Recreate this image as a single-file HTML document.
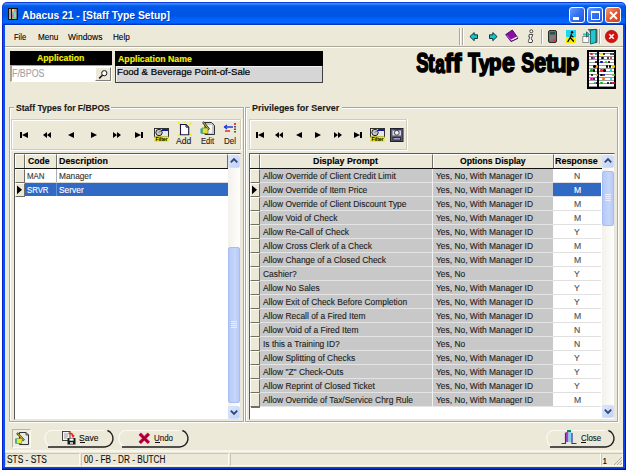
<!DOCTYPE html>
<html><head><meta charset="utf-8"><title>Abacus 21 - [Staff Type Setup]</title>
<style>
html,body{margin:0;padding:0;}
body{width:630px;height:474px;position:relative;overflow:hidden;background:#fff;font-family:"Liberation Sans",sans-serif;}
.a{position:absolute;box-sizing:border-box;}
.t{position:absolute;white-space:nowrap;font-family:"Liberation Sans",sans-serif;-webkit-text-stroke:0.12px currentColor;}
svg{position:absolute;overflow:visible;}
</style></head><body>
<div class="a" style="left:2px;top:2px;width:624px;height:468px;background:#0A3CD8;border-radius:5px 5px 0 0;"></div>
<div class="a" style="left:3px;top:3px;width:622px;height:466px;background:#0650F0;border-radius:4px 4px 0 0;"></div>
<div class="a" style="left:3px;top:3px;width:622px;height:22px;border-radius:4px 4px 0 0;background:linear-gradient(#3A90FF 0px,#3A90FF 1px,#1464F2 2px,#0058E8 4px,#0054E4 13px,#0062FA 16px,#0068FF 20px,#0036C8 21px,#0030C0 22px);"></div>
<div class="a" style="left:2px;top:25px;width:1px;height:445px;background:#0A20C8;"></div>
<div class="a" style="left:625px;top:25px;width:1px;height:445px;background:#00109A;"></div>
<div class="a" style="left:623px;top:25px;width:2px;height:443px;background:#0648F0;"></div>
<div class="a" style="left:3px;top:467px;width:622px;height:1px;background:#0648F0;"></div>
<div class="a" style="left:3px;top:468px;width:622px;height:1px;background:#0032C4;"></div>
<div class="a" style="left:2px;top:469px;width:624px;height:1px;background:#000C88;"></div>
<div class="a" style="left:5px;top:25px;width:618px;height:442px;background:#ECE9D8;"></div>
<div class="a" style="left:5px;top:25px;width:618px;height:1px;background:#F8F4E2;"></div>
<div class="a" style="left:8px;top:8px;width:10px;height:12px;background:#141414;"></div>
<div class="a" style="left:9px;top:9px;width:2px;height:2px;background:#9a9;"></div>
<div class="a" style="left:9px;top:11px;width:2px;height:2px;background:#c99;"></div>
<div class="a" style="left:9px;top:13px;width:2px;height:2px;background:#8ab;"></div>
<div class="a" style="left:9px;top:15px;width:2px;height:2px;background:#b9a;"></div>
<div class="a" style="left:9px;top:17px;width:2px;height:2px;background:#9b9;"></div>
<div class="a" style="left:12px;top:9px;width:2px;height:2px;background:#dd6;"></div>
<div class="a" style="left:14px;top:9px;width:2px;height:2px;background:#d88;"></div>
<div class="a" style="left:12px;top:11px;width:2px;height:2px;background:#9c9;"></div>
<div class="a" style="left:14px;top:11px;width:2px;height:2px;background:#6cc;"></div>
<div class="a" style="left:12px;top:13px;width:2px;height:2px;background:#c8c;"></div>
<div class="a" style="left:14px;top:13px;width:2px;height:2px;background:#8d8;"></div>
<div class="a" style="left:12px;top:15px;width:2px;height:2px;background:#d77;"></div>
<div class="a" style="left:14px;top:15px;width:2px;height:2px;background:#7dd;"></div>
<div class="a" style="left:12px;top:17px;width:2px;height:2px;background:#aa8;"></div>
<div class="a" style="left:14px;top:17px;width:2px;height:2px;background:#6d6;"></div>
<div class="a" style="left:16px;top:9px;width:1px;height:10px;background:#777;"></div>
<div class="t" style="left:22px;top:10.98px;font-size:10.43px;line-height:10.43px;font-weight:bold;color:#fff;transform:scaleX(0.9877);transform-origin:0 0;text-shadow:1px 1px 0 rgba(0,20,110,0.45);-webkit-text-stroke:0;">Abacus 21 - [Staff Type Setup]</div>
<div class="a" style="left:569px;top:7px;width:16px;height:16px;border:1px solid #fff;border-radius:3px;background:linear-gradient(135deg,#6A9CFF 0%,#3170F0 50%,#2257E0 100%);"></div>
<div class="a" style="left:573px;top:17px;width:6px;height:3px;background:#fff;"></div>
<div class="a" style="left:587px;top:7px;width:16px;height:16px;border:1px solid #fff;border-radius:3px;background:linear-gradient(135deg,#6A9CFF 0%,#3170F0 50%,#2257E0 100%);"></div>
<div class="a" style="left:591px;top:11px;width:9px;height:9px;border:1px solid #fff;border-top-width:2px;"></div>
<div class="a" style="left:605px;top:7px;width:16px;height:16px;border:1px solid #fff;border-radius:3px;background:linear-gradient(135deg,#F39A7A 0%,#E4582F 50%,#C9421C 100%);"></div>
<svg style="left:609px;top:11px" width="9" height="9"><path d="M1 1L8 8M8 1L1 8" stroke="#fff" stroke-width="1.8"/></svg>
<div class="t" style="left:14px;top:32.14px;font-size:9.88px;line-height:9.88px;font-weight:normal;color:#000;transform:scaleX(0.7666);transform-origin:0 0;">File</div>
<div class="t" style="left:38px;top:32.14px;font-size:9.88px;line-height:9.88px;font-weight:normal;color:#000;transform:scaleX(0.8257);transform-origin:0 0;">Menu</div>
<div class="t" style="left:68.3px;top:32.14px;font-size:9.88px;line-height:9.88px;font-weight:normal;color:#000;transform:scaleX(0.8611);transform-origin:0 0;">Windows</div>
<div class="t" style="left:113.2px;top:32.14px;font-size:9.88px;line-height:9.88px;font-weight:normal;color:#000;transform:scaleX(0.8222);transform-origin:0 0;">Help</div>
<div class="a" style="left:5px;top:46px;width:618px;height:1px;background:#ACA899;"></div>
<div class="a" style="left:5px;top:47px;width:618px;height:1px;background:#fff;"></div>
<div class="a" style="left:459px;top:28px;width:1px;height:17px;background:#ACA899;"></div>
<div class="a" style="left:460px;top:28px;width:1px;height:17px;background:#fff;"></div>
<div class="a" style="left:462px;top:28px;width:1px;height:17px;background:#ACA899;"></div>
<div class="a" style="left:463px;top:28px;width:1px;height:17px;background:#fff;"></div>
<div class="a" style="left:541px;top:29px;width:1px;height:15px;background:#ACA899;"></div>
<div class="a" style="left:542px;top:29px;width:1px;height:15px;background:#fff;"></div>
<div class="a" style="left:599px;top:29px;width:1px;height:15px;background:#ACA899;"></div>
<div class="a" style="left:600px;top:29px;width:1px;height:15px;background:#fff;"></div>
<svg style="left:469px;top:32px" width="10" height="10"><path d="M0.9 4.6L5.2 0.6V2.8H8.5V6.5H5.2V8.7Z" fill="#12C4CC" stroke="#063C3C" stroke-width="1"/></svg>
<svg style="left:488px;top:32px" width="10" height="10"><path d="M9.1 4.6L4.8 0.6V2.8H1.5V6.5H4.8V8.7Z" fill="#12C4CC" stroke="#063C3C" stroke-width="1"/></svg>
<svg style="left:505px;top:29px" width="14" height="14"><path d="M7.3 1L0.7 5.6L5.9 12.4L13 9Z" fill="#8A0EA8" stroke="#4A0060" stroke-width="0.9"/><path d="M1.8 6.2L6.3 11.4" stroke="#C070E0" stroke-width="0.9"/><path d="M6.3 11.2L12.3 8.2" stroke="#fff" stroke-width="1.3"/><path d="M6 12.6L13 9.3" stroke="#303" stroke-width="0.7"/></svg>
<svg style="left:527px;top:29px" width="8" height="15"><circle cx="4.3" cy="2.3" r="1.5" fill="#fff" stroke="#333" stroke-width="0.9"/><path d="M2.2 5.5H5.8L4.3 9.5Q3.8 11 5.6 11L5 13.5H1.8Q1 13 1.6 11.5L2.8 8H1.8Z" fill="#fff" stroke="#333" stroke-width="0.9"/></svg>
<svg style="left:548px;top:30px" width="9" height="13"><rect x="0.5" y="0.5" width="8" height="12" rx="1.5" fill="#727272" stroke="#2a2a2a"/><rect x="2" y="2" width="5" height="2.5" fill="#2f4f4f"/><path d="M2 6H7M2 8H7M2 10H5" stroke="#888" stroke-width="0.8"/><rect x="5.2" y="9.5" width="2" height="1.6" fill="#f22"/></svg>
<div class="a" style="left:566px;top:30px;width:10px;height:7px;background:#19D9F2;"></div>
<div class="a" style="left:566px;top:37px;width:10px;height:6px;background:#F2EE00;"></div>
<svg style="left:566px;top:30px" width="10" height="13"><circle cx="6" cy="2.3" r="1.2" fill="#000"/><path d="M5.6 3.8L4 8L1.6 12M4.2 7.5L7.8 11.5M5 5.5L7.5 7.2" stroke="#000" stroke-width="1.3" fill="none"/></svg>
<svg style="left:582px;top:28px" width="17" height="17"><rect x="0.8" y="8.5" width="6" height="6" fill="#fff" stroke="#777" stroke-width="0.8"/><path d="M6 1.5H15V14.5H13" fill="#777" stroke="#444" stroke-width="0.8"/><path d="M8.5 2.5L14 1.2V14.5L8.5 16Z" fill="#22C8CC" stroke="#055" stroke-width="0.8"/><path d="M1 6.5H6" stroke="#22C8CC" stroke-width="2.2"/><path d="M4.5 3.8L7.5 6.5L4.5 9.2Z" fill="#22C8CC" stroke="#033" stroke-width="0.6"/></svg>
<svg style="left:605px;top:30px" width="14" height="14"><circle cx="6.5" cy="6.5" r="6.2" fill="#D81010" stroke="#901010" stroke-width="0.6"/><path d="M4.3 4.3L8.7 8.7M8.7 4.3L4.3 8.7" stroke="#fff" stroke-width="1.6"/></svg>
<div class="a" style="left:10px;top:51px;width:102px;height:14px;background:#000;"></div>
<div class="t" style="left:37.3px;top:54.27px;font-size:8.78px;line-height:8.78px;font-weight:bold;color:#F4F400;transform:scaleX(0.9938);transform-origin:0 0;">Application</div>
<div class="a" style="left:10px;top:65px;width:102px;height:17px;background:#fff;border-left:2px solid #A7A491;border-top:1px solid #A7A491;border-right:1px solid #fff;border-bottom:1px solid #fff;"></div>
<div class="t" style="left:12.3px;top:69.32px;font-size:10.01px;line-height:10.01px;font-weight:normal;color:#A4A4A4;transform:scaleX(0.8850);transform-origin:0 0;">F/BPOS</div>
<div class="a" style="left:95px;top:67px;width:16px;height:14px;background:#ECE9D8;border-right:1px solid #7f7f7f;border-bottom:1px solid #7f7f7f;border-left:1px solid #fff;border-top:1px solid #fff;"></div>
<svg style="left:98px;top:69px" width="11" height="11"><circle cx="6.3" cy="4.2" r="2.6" fill="#fff" stroke="#111" stroke-width="1"/><path d="M4.4 6.2L1.2 9.4" stroke="#111" stroke-width="1.5"/></svg>
<div class="a" style="left:115px;top:51px;width:208px;height:15px;background:#000;"></div>
<div class="t" style="left:118.3px;top:55.30px;font-size:8.50px;line-height:8.50px;font-weight:bold;color:#F4F400;transform:scaleX(1.0274);transform-origin:0 0;">Application Name</div>
<div class="a" style="left:115px;top:66px;width:208px;height:17px;background:#D6D6D6;border-right:1px solid #404040;border-bottom:1px solid #404040;border-left:1px solid #404040;"></div>
<div class="a" style="left:116px;top:66px;width:206px;height:16px;border-left:1px solid #F4F4F4;border-top:1px solid #F4F4F4;"></div>
<div class="t" style="left:117px;top:68.12px;font-size:9.19px;line-height:9.19px;font-weight:normal;color:#000;transform:scaleX(1.0494);transform-origin:0 0;-webkit-text-stroke:0.2px #000;">Food &amp; Beverage Point-of-Sale</div>
<div class="t" style="left:415.84px;top:50.09px;font-size:27.04px;line-height:27.04px;font-weight:bold;color:#000;-webkit-text-stroke:1.70px #000;transform:scaleX(0.6815);transform-origin:0.54px 0;">S</div>
<div class="t" style="left:428.08px;top:50.40px;font-size:26.57px;line-height:26.57px;font-weight:bold;color:#000;-webkit-text-stroke:1.70px #000;transform:scaleX(0.7547);transform-origin:0.27px 0;">t</div>
<div class="t" style="left:434.84px;top:50.88px;font-size:26.00px;line-height:26.00px;font-weight:bold;color:#000;-webkit-text-stroke:1.70px #000;transform:scaleX(0.6625);transform-origin:0.52px 0;">a</div>
<div class="t" style="left:445.31px;top:51.38px;font-size:25.48px;line-height:25.48px;font-weight:bold;color:#000;-webkit-text-stroke:1.70px #000;transform:scaleX(0.9002);transform-origin:0.25px 0;">f</div>
<div class="t" style="left:453.09px;top:51.38px;font-size:25.48px;line-height:25.48px;font-weight:bold;color:#000;-webkit-text-stroke:1.70px #000;transform:scaleX(0.9893);transform-origin:0.25px 0;">f</div>
<div class="t" style="left:467.65px;top:50.22px;font-size:26.86px;line-height:26.86px;font-weight:bold;color:#000;-webkit-text-stroke:1.70px #000;transform:scaleX(0.7241);transform-origin:0.27px 0;">T</div>
<div class="t" style="left:478.53px;top:51.66px;font-size:22.70px;line-height:22.70px;font-weight:bold;color:#000;-webkit-text-stroke:1.70px #000;transform:scaleX(0.8603);transform-origin:0.00px 0;">y</div>
<div class="t" style="left:488.63px;top:51.98px;font-size:22.40px;line-height:22.40px;font-weight:bold;color:#000;-webkit-text-stroke:1.70px #000;transform:scaleX(0.9143);transform-origin:1.34px 0;">p</div>
<div class="t" style="left:502.43px;top:50.36px;font-size:26.73px;line-height:26.73px;font-weight:bold;color:#000;-webkit-text-stroke:1.70px #000;transform:scaleX(0.8630);transform-origin:0.80px 0;">e</div>
<div class="t" style="left:521.27px;top:50.09px;font-size:27.04px;line-height:27.04px;font-weight:bold;color:#000;-webkit-text-stroke:1.70px #000;transform:scaleX(0.7144);transform-origin:0.54px 0;">S</div>
<div class="t" style="left:534.18px;top:50.36px;font-size:26.73px;line-height:26.73px;font-weight:bold;color:#000;-webkit-text-stroke:1.70px #000;transform:scaleX(0.7966);transform-origin:0.80px 0;">e</div>
<div class="t" style="left:545.81px;top:50.40px;font-size:26.57px;line-height:26.57px;font-weight:bold;color:#000;-webkit-text-stroke:1.70px #000;transform:scaleX(0.9116);transform-origin:0.27px 0;">t</div>
<div class="t" style="left:553.31px;top:50.47px;font-size:26.48px;line-height:26.48px;font-weight:bold;color:#000;-webkit-text-stroke:1.70px #000;transform:scaleX(0.8177);transform-origin:1.59px 0;">u</div>
<div class="t" style="left:565.67px;top:51.98px;font-size:22.40px;line-height:22.40px;font-weight:bold;color:#000;-webkit-text-stroke:1.70px #000;transform:scaleX(0.9525);transform-origin:1.34px 0;">p</div>
<div class="a" style="left:587px;top:50px;width:29px;height:39px;background:#000;"></div>
<div class="a" style="left:589px;top:52px;width:8px;height:35px;background:#fff;"></div>
<div class="a" style="left:599px;top:52px;width:15px;height:35px;background:#fff;"></div>
<div class="a" style="left:589px;top:53px;width:8px;height:1px;background:#9a9a9a;"></div>
<div class="a" style="left:599px;top:53px;width:15px;height:1px;background:#9a9a9a;"></div>
<div class="a" style="left:589px;top:56px;width:8px;height:1px;background:#9a9a9a;"></div>
<div class="a" style="left:599px;top:56px;width:15px;height:1px;background:#9a9a9a;"></div>
<div class="a" style="left:589px;top:59px;width:8px;height:1px;background:#9a9a9a;"></div>
<div class="a" style="left:599px;top:59px;width:15px;height:1px;background:#9a9a9a;"></div>
<div class="a" style="left:589px;top:62px;width:8px;height:1px;background:#9a9a9a;"></div>
<div class="a" style="left:599px;top:62px;width:15px;height:1px;background:#9a9a9a;"></div>
<div class="a" style="left:589px;top:65px;width:8px;height:1px;background:#9a9a9a;"></div>
<div class="a" style="left:599px;top:65px;width:15px;height:1px;background:#9a9a9a;"></div>
<div class="a" style="left:589px;top:68px;width:8px;height:1px;background:#9a9a9a;"></div>
<div class="a" style="left:599px;top:68px;width:15px;height:1px;background:#9a9a9a;"></div>
<div class="a" style="left:589px;top:71px;width:8px;height:1px;background:#9a9a9a;"></div>
<div class="a" style="left:599px;top:71px;width:15px;height:1px;background:#9a9a9a;"></div>
<div class="a" style="left:589px;top:74px;width:8px;height:1px;background:#9a9a9a;"></div>
<div class="a" style="left:599px;top:74px;width:15px;height:1px;background:#9a9a9a;"></div>
<div class="a" style="left:589px;top:77px;width:8px;height:1px;background:#9a9a9a;"></div>
<div class="a" style="left:599px;top:77px;width:15px;height:1px;background:#9a9a9a;"></div>
<div class="a" style="left:589px;top:80px;width:8px;height:1px;background:#9a9a9a;"></div>
<div class="a" style="left:599px;top:80px;width:15px;height:1px;background:#9a9a9a;"></div>
<div class="a" style="left:589px;top:83px;width:8px;height:1px;background:#9a9a9a;"></div>
<div class="a" style="left:599px;top:83px;width:15px;height:1px;background:#9a9a9a;"></div>
<div class="a" style="left:589px;top:86px;width:8px;height:1px;background:#9a9a9a;"></div>
<div class="a" style="left:599px;top:86px;width:15px;height:1px;background:#9a9a9a;"></div>
<div class="a" style="left:590.2px;top:52.6px;width:2.4px;height:2.4px;border-radius:50%;background:#e22;"></div>
<div class="a" style="left:594.7px;top:52.6px;width:2.4px;height:2.4px;border-radius:50%;background:#088;"></div>
<div class="a" style="left:600.2px;top:52.6px;width:2.4px;height:2.4px;border-radius:50%;background:#ee0;"></div>
<div class="a" style="left:602.7px;top:52.6px;width:2.4px;height:2.4px;border-radius:50%;background:#000;"></div>
<div class="a" style="left:609.7px;top:52.6px;width:2.4px;height:2.4px;border-radius:50%;background:#222;"></div>
<div class="a" style="left:612.2px;top:52.6px;width:2.4px;height:2.4px;border-radius:50%;background:#333;"></div>
<div class="a" style="left:590.7px;top:56.8px;width:2.4px;height:2.4px;border-radius:50%;background:#000;"></div>
<div class="a" style="left:592.7px;top:56.8px;width:2.4px;height:2.4px;border-radius:50%;background:#d0d;"></div>
<div class="a" style="left:601.2px;top:56.8px;width:2.4px;height:2.4px;border-radius:50%;background:#000;"></div>
<div class="a" style="left:606.7px;top:56.8px;width:2.4px;height:2.4px;border-radius:50%;background:#000;"></div>
<div class="a" style="left:609.7px;top:56.8px;width:2.4px;height:2.4px;border-radius:50%;background:#e00;"></div>
<div class="a" style="left:594.7px;top:61.0px;width:2.4px;height:2.4px;border-radius:50%;background:#000;"></div>
<div class="a" style="left:600.2px;top:61.0px;width:2.4px;height:2.4px;border-radius:50%;background:#00d;"></div>
<div class="a" style="left:604.7px;top:61.0px;width:2.4px;height:2.4px;border-radius:50%;background:#2c2;"></div>
<div class="a" style="left:607.7px;top:61.0px;width:2.4px;height:2.4px;border-radius:50%;background:#000;"></div>
<div class="a" style="left:593.2px;top:65.2px;width:2.4px;height:2.4px;border-radius:50%;background:#000;"></div>
<div class="a" style="left:595.7px;top:65.2px;width:2.4px;height:2.4px;border-radius:50%;background:#f80;"></div>
<div class="a" style="left:605.7px;top:65.2px;width:2.4px;height:2.4px;border-radius:50%;background:#000;"></div>
<div class="a" style="left:608.7px;top:65.2px;width:2.4px;height:2.4px;border-radius:50%;background:#000;"></div>
<div class="a" style="left:612.2px;top:65.2px;width:2.4px;height:2.4px;border-radius:50%;background:#ec0;"></div>
<div class="a" style="left:590.2px;top:69.4px;width:2.4px;height:2.4px;border-radius:50%;background:#1a1;"></div>
<div class="a" style="left:592.7px;top:69.4px;width:2.4px;height:2.4px;border-radius:50%;background:#000;"></div>
<div class="a" style="left:600.2px;top:69.4px;width:2.4px;height:2.4px;border-radius:50%;background:#e22;"></div>
<div class="a" style="left:603.2px;top:69.4px;width:2.4px;height:2.4px;border-radius:50%;background:#000;"></div>
<div class="a" style="left:609.7px;top:69.4px;width:2.4px;height:2.4px;border-radius:50%;background:#0dd;"></div>
<div class="a" style="left:590.7px;top:73.6px;width:2.4px;height:2.4px;border-radius:50%;background:#000;"></div>
<div class="a" style="left:595.7px;top:73.6px;width:2.4px;height:2.4px;border-radius:50%;background:#cb4;"></div>
<div class="a" style="left:600.2px;top:73.6px;width:2.4px;height:2.4px;border-radius:50%;background:#000;"></div>
<div class="a" style="left:602.7px;top:73.6px;width:2.4px;height:2.4px;border-radius:50%;background:#00c;"></div>
<div class="a" style="left:612.2px;top:73.6px;width:2.4px;height:2.4px;border-radius:50%;background:#6c4;"></div>
<div class="a" style="left:590.2px;top:77.8px;width:2.4px;height:2.4px;border-radius:50%;background:#e0a;"></div>
<div class="a" style="left:592.7px;top:77.8px;width:2.4px;height:2.4px;border-radius:50%;background:#000;"></div>
<div class="a" style="left:602.2px;top:77.8px;width:2.4px;height:2.4px;border-radius:50%;background:#f60;"></div>
<div class="a" style="left:609.7px;top:77.8px;width:2.4px;height:2.4px;border-radius:50%;background:#0cc;"></div>
<div class="a" style="left:593.7px;top:82.0px;width:2.4px;height:2.4px;border-radius:50%;background:#48a;"></div>
<div class="a" style="left:595.7px;top:82.0px;width:2.4px;height:2.4px;border-radius:50%;background:#000;"></div>
<div class="a" style="left:600.2px;top:82.0px;width:2.4px;height:2.4px;border-radius:50%;background:#0c0;"></div>
<div class="a" style="left:606.7px;top:82.0px;width:2.4px;height:2.4px;border-radius:50%;background:#000;"></div>
<div class="a" style="left:609.7px;top:82.0px;width:2.4px;height:2.4px;border-radius:50%;background:#000;"></div>
<div class="a" style="left:612.2px;top:82.0px;width:2.4px;height:2.4px;border-radius:50%;background:#d06;"></div>
<div class="a" style="left:9px;top:107px;width:235px;height:315px;border:1px solid #ACA899;"></div>
<div class="a" style="left:10px;top:108px;width:233px;height:313px;border-left:1px solid #fff;border-top:1px solid #fff;"></div>
<div class="a" style="left:9px;top:107px;width:236px;height:316px;border-right:1px solid #fff;border-bottom:1px solid #fff;"></div>
<div class="a" style="left:14px;top:102px;width:97px;height:10px;background:#ECE9D8;"></div>
<div class="t" style="left:16px;top:103.98px;font-size:8.64px;line-height:8.64px;font-weight:bold;color:#1a1a1a;transform:scaleX(0.9954);transform-origin:0 0;">Staff Types for F/BPOS</div>
<div class="a" style="left:245px;top:107px;width:373px;height:315px;border:1px solid #ACA899;"></div>
<div class="a" style="left:246px;top:108px;width:371px;height:313px;border-left:1px solid #fff;border-top:1px solid #fff;"></div>
<div class="a" style="left:245px;top:107px;width:374px;height:316px;border-right:1px solid #fff;border-bottom:1px solid #fff;"></div>
<div class="a" style="left:250px;top:102px;width:92px;height:10px;background:#ECE9D8;"></div>
<div class="t" style="left:252px;top:104.08px;font-size:8.64px;line-height:8.64px;font-weight:bold;color:#1a1a1a;transform:scaleX(1.0385);transform-origin:0 0;">Privileges for Server</div>
<div class="a" style="left:11px;top:119px;width:230px;height:31px;border:1px solid #CFCCBC;"></div>
<div class="a" style="left:12px;top:120px;width:228px;height:29px;border-left:1px solid #fff;border-top:1px solid #fff;"></div>
<div class="a" style="left:11px;top:119px;width:231px;height:32px;border-right:1px solid #fff;border-bottom:1px solid #fff;"></div>
<div class="a" style="left:249px;top:119px;width:158px;height:31px;border:1px solid #CFCCBC;"></div>
<div class="a" style="left:250px;top:120px;width:156px;height:29px;border-left:1px solid #fff;border-top:1px solid #fff;"></div>
<div class="a" style="left:249px;top:119px;width:159px;height:32px;border-right:1px solid #fff;border-bottom:1px solid #fff;"></div>
<svg style="left:20px;top:132px" width="9" height="7"><path d="M0 0H2V6H0Z M8 0V6L2 3Z" fill="#000"/></svg>
<svg style="left:43px;top:132px" width="9" height="7"><path d="M4 0V6L0 3Z M8 0V6L4 3Z" fill="#000"/></svg>
<svg style="left:68px;top:132px" width="9" height="7"><path d="M6 0V6L0 3Z" fill="#000"/></svg>
<svg style="left:91px;top:132px" width="9" height="7"><path d="M0 0V6L6 3Z" fill="#000"/></svg>
<svg style="left:113px;top:132px" width="9" height="7"><path d="M0 0V6L4 3Z M4 0V6L8 3Z" fill="#000"/></svg>
<svg style="left:135px;top:132px" width="9" height="7"><path d="M0 0V6L6 3Z M6 0H8V6H6Z" fill="#000"/></svg>
<svg style="left:256px;top:132px" width="9" height="7"><path d="M0 0H2V6H0Z M8 0V6L2 3Z" fill="#000"/></svg>
<svg style="left:275px;top:132px" width="9" height="7"><path d="M4 0V6L0 3Z M8 0V6L4 3Z" fill="#000"/></svg>
<svg style="left:296px;top:132px" width="9" height="7"><path d="M6 0V6L0 3Z" fill="#000"/></svg>
<svg style="left:315px;top:132px" width="9" height="7"><path d="M0 0V6L6 3Z" fill="#000"/></svg>
<svg style="left:334px;top:132px" width="9" height="7"><path d="M0 0V6L4 3Z M4 0V6L8 3Z" fill="#000"/></svg>
<svg style="left:354px;top:132px" width="9" height="7"><path d="M0 0V6L6 3Z M6 0H8V6H6Z" fill="#000"/></svg>
<svg style="left:154px;top:128px" width="15" height="14"><rect x="0.5" y="0.5" width="14" height="8.5" fill="#E8E8E8" stroke="#303030"/><rect x="8" y="1" width="6" height="2" fill="#1020A0"/><circle cx="5" cy="4.5" r="3.2" fill="#C8C8C8" stroke="#222" stroke-width="1"/><path d="M5 4.5L6.5 3" stroke="#222" stroke-width="0.8"/><rect x="0.5" y="8.5" width="14" height="5.5" fill="#F0F000"/><text x="7.5" y="13.2" font-size="5.2" font-family="Liberation Sans" font-weight="bold" text-anchor="middle" fill="#000" textLength="12">Filter</text></svg>
<svg style="left:370px;top:128px" width="15" height="14"><rect x="0.5" y="0.5" width="14" height="8.5" fill="#E8E8E8" stroke="#303030"/><rect x="8" y="1" width="6" height="2" fill="#1020A0"/><circle cx="5" cy="4.5" r="3.2" fill="#C8C8C8" stroke="#222" stroke-width="1"/><path d="M5 4.5L6.5 3" stroke="#222" stroke-width="0.8"/><rect x="0.5" y="8.5" width="14" height="5.5" fill="#F0F000"/><text x="7.5" y="13.2" font-size="5.2" font-family="Liberation Sans" font-weight="bold" text-anchor="middle" fill="#000" textLength="12">Filter</text></svg>
<svg style="left:390px;top:128px" width="14" height="14"><rect x="0.5" y="0.5" width="12.5" height="13" fill="#5A5A6A" stroke="#222"/><rect x="2.5" y="1" width="8.5" height="6.5" fill="#D8D8F0"/><rect x="2.5" y="1" width="8.5" height="1.5" fill="#3030B0"/><circle cx="6.8" cy="4.8" r="2.4" fill="#F0F0F0" stroke="#333" stroke-width="0.9"/><rect x="2.5" y="9" width="8.5" height="3.5" fill="#2A2A3A"/><rect x="3.5" y="10" width="6.5" height="1.6" fill="#A0A0D0"/></svg>
<svg style="left:177px;top:121px" width="16" height="16"><path d="M1 1L3.5 3.5M14.5 1.5L12 4M1 15L3.5 12.5M15 15L12.5 12.5M8 0.5V2" stroke="#F4F000" stroke-width="1.5"/><path d="M3.5 3.5H9L11.7 6.2V13.8H3.5Z" fill="#fff" stroke="#1a1a40" stroke-width="1.1"/><path d="M9 3.5V6.2H11.7" fill="none" stroke="#1a1a40" stroke-width="0.9"/></svg>
<div class="t" style="left:176px;top:137.00px;font-size:8.50px;line-height:8.50px;font-weight:normal;color:#222;transform:scaleX(1.0111);transform-origin:0 0;">Add</div>
<svg style="left:200px;top:121px" width="16" height="15"><path d="M5 1.5H11.5L14.5 4.5V13.5H5Z" fill="#C8C8C8" stroke="#303030" stroke-width="1"/><path d="M7 4H12V12H7Z" fill="#F4F4F4"/><path d="M3 1L9 8.5" stroke="#222" stroke-width="2.2"/><path d="M3.4 1.4L8.6 8" stroke="#E8E020" stroke-width="1"/><path d="M2 7H8V12.5H2Z" fill="#E0E040" stroke="#555" stroke-width="0.6"/><rect x="0.5" y="7.5" width="2" height="5" fill="#10B0B0"/></svg>
<div class="t" style="left:200.5px;top:137.00px;font-size:8.50px;line-height:8.50px;font-weight:normal;color:#222;transform:scaleX(0.8871);transform-origin:0 0;">Edit</div>
<svg style="left:224px;top:123px" width="13" height="11"><path d="M0.5 4H9" stroke="#1030E0" stroke-width="1.4"/><path d="M3 2L0.5 4L3 6" fill="none" stroke="#1030E0" stroke-width="1.2"/><path d="M1 8H6" stroke="#E02020" stroke-width="1.4"/><path d="M11 0.5V10.5" stroke="#222" stroke-width="1.5" stroke-dasharray="1.5 1"/><rect x="10" y="0" width="2" height="2" fill="#f33"/></svg>
<div class="t" style="left:224px;top:137.00px;font-size:8.50px;line-height:8.50px;font-weight:normal;color:#222;transform:scaleX(0.9403);transform-origin:0 0;">Del</div>
<div class="a" style="left:14px;top:153px;width:227px;height:267px;background:#fff;border-left:1px solid #5A5A5A;border-top:1px solid #5A5A5A;border-right:1px solid #E8E6DC;border-bottom:1px solid #E8E6DC;"></div>
<div class="a" style="left:15px;top:154px;width:10px;height:15px;background:#ECE9D8;border-left:1px solid #fff;border-top:1px solid #fff;border-right:1px solid #716F64;border-bottom:1px solid #716F64;"></div>
<div class="a" style="left:25px;top:154px;width:32px;height:15px;background:#ECE9D8;border-left:1px solid #fff;border-top:1px solid #fff;border-right:1px solid #716F64;border-bottom:1px solid #716F64;"></div>
<div class="a" style="left:57px;top:154px;width:171px;height:15px;background:#ECE9D8;border-left:1px solid #fff;border-top:1px solid #fff;border-right:1px solid #716F64;border-bottom:1px solid #716F64;"></div>
<div class="a" style="left:15px;top:168px;width:213px;height:1px;background:#111;"></div>
<div class="t" style="left:27.6px;top:157.18px;font-size:8.64px;line-height:8.64px;font-weight:bold;color:#000;transform:scaleX(0.9951);transform-origin:0 0;">Code</div>
<div class="t" style="left:59px;top:157.18px;font-size:8.64px;line-height:8.64px;font-weight:bold;color:#000;transform:scaleX(1.0307);transform-origin:0 0;">Description</div>
<div class="a" style="left:15px;top:169px;width:10px;height:14px;background:#ECE9D8;border-left:1px solid #fff;border-top:1px solid #fff;border-right:1px solid #716F64;border-bottom:1px solid #716F64;"></div>
<div class="a" style="left:25px;top:169px;width:203px;height:14px;background:#fff;"></div>
<div class="a" style="left:56px;top:169px;width:1px;height:14px;background:#B0B0B0;"></div>
<div class="a" style="left:25px;top:182px;width:203px;height:1px;background:#D8D8D8;"></div>
<div class="t" style="left:27.3px;top:171.68px;font-size:8.64px;line-height:8.64px;font-weight:normal;color:#3a3a3a;transform:scaleX(0.9165);transform-origin:0 0;">MAN</div>
<div class="t" style="left:59px;top:171.68px;font-size:8.64px;line-height:8.64px;font-weight:normal;color:#333;transform:scaleX(0.9617);transform-origin:0 0;">Manager</div>
<div class="a" style="left:15px;top:183px;width:10px;height:14px;background:#ECE9D8;border-left:1px solid #fff;border-top:1px solid #fff;border-right:1px solid #716F64;border-bottom:1px solid #716F64;"></div>
<svg style="left:17px;top:185px" width="6" height="10"><path d="M0 0.5L5 4.8L0 9.2Z" fill="#000"/></svg>
<div class="a" style="left:25px;top:183px;width:203px;height:13px;background:#316AC5;"></div>
<div class="a" style="left:56px;top:183px;width:1px;height:13px;background:#6A8FD0;"></div>
<div class="t" style="left:27.3px;top:185.67px;font-size:8.78px;line-height:8.78px;font-weight:normal;color:#fff;transform:scaleX(0.8872);transform-origin:0 0;">SRVR</div>
<div class="t" style="left:58.8px;top:185.67px;font-size:8.78px;line-height:8.78px;font-weight:normal;color:#fff;transform:scaleX(0.9591);transform-origin:0 0;">Server</div>
<div class="a" style="left:16px;top:196px;width:9px;height:1px;background:#716F64;"></div>
<div class="a" style="left:228px;top:155px;width:12px;height:264px;background:linear-gradient(90deg,#F3F1EC,#FEFEFB);"></div>
<div class="a" style="left:228px;top:155px;width:12px;height:13px;background:linear-gradient(135deg,#DCE6FE,#C0D2FA);border:1px solid #D2DEFA;border-radius:2px;"></div>
<svg style="left:230px;top:158px" width="8" height="5"><path d="M0.8 4.4L4 1.2L7.2 4.4" fill="none" stroke="#34486E" stroke-width="1.9"/></svg>
<div class="a" style="left:228px;top:406px;width:12px;height:13px;background:linear-gradient(135deg,#DCE6FE,#C0D2FA);border:1px solid #D2DEFA;border-radius:2px;"></div>
<svg style="left:230px;top:410px" width="8" height="5"><path d="M0.8 0.6L4 3.8L7.2 0.6" fill="none" stroke="#34486E" stroke-width="1.9"/></svg>
<div class="a" style="left:228px;top:247px;width:12px;height:156px;background:linear-gradient(90deg,#B5C8F7,#C6D6FB 60%,#B7CAF7);border:1px solid #A9BDF2;border-radius:2px;"></div>
<div class="a" style="left:231px;top:321px;width:6px;height:1px;background:#E8EEFD;"></div>
<div class="a" style="left:231px;top:323px;width:6px;height:1px;background:#E8EEFD;"></div>
<div class="a" style="left:231px;top:325px;width:6px;height:1px;background:#E8EEFD;"></div>
<div class="a" style="left:231px;top:327px;width:6px;height:1px;background:#E8EEFD;"></div>
<div class="a" style="left:249px;top:153px;width:366px;height:267px;background:#fff;border-left:1px solid #5A5A5A;border-top:1px solid #5A5A5A;border-right:1px solid #E8E6DC;border-bottom:1px solid #E8E6DC;"></div>
<div class="a" style="left:250px;top:154px;width:10px;height:15px;background:#ECE9D8;border-left:1px solid #fff;border-top:1px solid #fff;border-right:1px solid #716F64;border-bottom:1px solid #716F64;"></div>
<div class="a" style="left:260px;top:154px;width:173px;height:15px;background:#ECE9D8;border-left:1px solid #fff;border-top:1px solid #fff;border-right:1px solid #716F64;border-bottom:1px solid #716F64;"></div>
<div class="a" style="left:433px;top:154px;width:121px;height:15px;background:#ECE9D8;border-left:1px solid #fff;border-top:1px solid #fff;border-right:1px solid #716F64;border-bottom:1px solid #716F64;"></div>
<div class="a" style="left:554px;top:154px;width:48px;height:15px;background:#ECE9D8;border-left:1px solid #fff;border-top:1px solid #fff;border-right:1px solid #716F64;border-bottom:1px solid #716F64;"></div>
<div class="a" style="left:601px;top:154px;width:1px;height:14px;background:#ECE9D8;"></div>
<div class="a" style="left:250px;top:168px;width:352px;height:1px;background:#111;"></div>
<div class="t" style="left:313.2px;top:157.18px;font-size:8.64px;line-height:8.64px;font-weight:bold;color:#000;transform:scaleX(1.0254);transform-origin:0 0;">Display Prompt</div>
<div class="t" style="left:459.5px;top:157.18px;font-size:8.64px;line-height:8.64px;font-weight:bold;color:#000;transform:scaleX(1.0002);transform-origin:0 0;">Options Display</div>
<div class="t" style="left:555px;top:157.18px;font-size:8.64px;line-height:8.64px;font-weight:bold;color:#000;transform:scaleX(1.0338);transform-origin:0 0;">Response</div>
<div class="a" style="left:250px;top:169px;width:10px;height:14px;background:#ECE9D8;border-left:1px solid #fff;border-top:1px solid #fff;border-right:1px solid #716F64;border-bottom:1px solid #716F64;"></div>
<div class="a" style="left:260px;top:169px;width:293px;height:14px;background:#C8C8C8;border-bottom:1px solid #E4E4E4;"></div>
<div class="a" style="left:432px;top:169px;width:1px;height:14px;background:#F0F0F0;"></div>
<div class="a" style="left:553px;top:169px;width:48px;height:14px;background:#fff;border-bottom:1px solid #E0E0E0;"></div>
<div class="t" style="left:263px;top:171.85px;font-size:8.92px;line-height:8.92px;font-weight:normal;color:#1c1c1c;transform:scaleX(0.945);transform-origin:0 0;">Allow Override of Client Credit Limit</div>
<div class="t" style="left:435.5px;top:171.85px;font-size:8.92px;line-height:8.92px;font-weight:normal;color:#1c1c1c;transform:scaleX(0.945);transform-origin:0 0;">Yes, No, With Manager ID</div>
<div class="t" style="left:574px;top:172.18px;font-size:8.64px;line-height:8.64px;font-weight:normal;color:#505050;">N</div>
<div class="a" style="left:250px;top:183px;width:10px;height:14px;background:#ECE9D8;border-left:1px solid #fff;border-top:1px solid #fff;border-right:1px solid #716F64;border-bottom:1px solid #716F64;"></div>
<div class="a" style="left:260px;top:183px;width:293px;height:14px;background:#C8C8C8;border-bottom:1px solid #E4E4E4;"></div>
<div class="a" style="left:432px;top:183px;width:1px;height:14px;background:#F0F0F0;"></div>
<div class="a" style="left:553px;top:183px;width:48px;height:14px;background:#316AC5;border-bottom:1px solid #E0E0E0;"></div>
<div class="t" style="left:263px;top:185.85px;font-size:8.92px;line-height:8.92px;font-weight:normal;color:#1c1c1c;transform:scaleX(0.945);transform-origin:0 0;">Allow Override of Item Price</div>
<div class="t" style="left:435.5px;top:185.85px;font-size:8.92px;line-height:8.92px;font-weight:normal;color:#1c1c1c;transform:scaleX(0.945);transform-origin:0 0;">Yes, No, With Manager ID</div>
<div class="t" style="left:574px;top:186.18px;font-size:8.64px;line-height:8.64px;font-weight:normal;color:#fff;">M</div>
<svg style="left:252px;top:185px" width="6" height="10"><path d="M0 0.5L5 4.8L0 9.2Z" fill="#000"/></svg>
<div class="a" style="left:250px;top:197px;width:10px;height:14px;background:#ECE9D8;border-left:1px solid #fff;border-top:1px solid #fff;border-right:1px solid #716F64;border-bottom:1px solid #716F64;"></div>
<div class="a" style="left:260px;top:197px;width:293px;height:14px;background:#C8C8C8;border-bottom:1px solid #E4E4E4;"></div>
<div class="a" style="left:432px;top:197px;width:1px;height:14px;background:#F0F0F0;"></div>
<div class="a" style="left:553px;top:197px;width:48px;height:14px;background:#fff;border-bottom:1px solid #E0E0E0;"></div>
<div class="t" style="left:263px;top:199.85px;font-size:8.92px;line-height:8.92px;font-weight:normal;color:#1c1c1c;transform:scaleX(0.945);transform-origin:0 0;">Allow Override of Client Discount Type</div>
<div class="t" style="left:435.5px;top:199.85px;font-size:8.92px;line-height:8.92px;font-weight:normal;color:#1c1c1c;transform:scaleX(0.945);transform-origin:0 0;">Yes, No, With Manager ID</div>
<div class="t" style="left:574px;top:200.18px;font-size:8.64px;line-height:8.64px;font-weight:normal;color:#505050;">M</div>
<div class="a" style="left:250px;top:211px;width:10px;height:14px;background:#ECE9D8;border-left:1px solid #fff;border-top:1px solid #fff;border-right:1px solid #716F64;border-bottom:1px solid #716F64;"></div>
<div class="a" style="left:260px;top:211px;width:293px;height:14px;background:#C8C8C8;border-bottom:1px solid #E4E4E4;"></div>
<div class="a" style="left:432px;top:211px;width:1px;height:14px;background:#F0F0F0;"></div>
<div class="a" style="left:553px;top:211px;width:48px;height:14px;background:#fff;border-bottom:1px solid #E0E0E0;"></div>
<div class="t" style="left:263px;top:213.85px;font-size:8.92px;line-height:8.92px;font-weight:normal;color:#1c1c1c;transform:scaleX(0.945);transform-origin:0 0;">Allow Void of Check</div>
<div class="t" style="left:435.5px;top:213.85px;font-size:8.92px;line-height:8.92px;font-weight:normal;color:#1c1c1c;transform:scaleX(0.945);transform-origin:0 0;">Yes, No, With Manager ID</div>
<div class="t" style="left:574px;top:214.18px;font-size:8.64px;line-height:8.64px;font-weight:normal;color:#505050;">M</div>
<div class="a" style="left:250px;top:225px;width:10px;height:14px;background:#ECE9D8;border-left:1px solid #fff;border-top:1px solid #fff;border-right:1px solid #716F64;border-bottom:1px solid #716F64;"></div>
<div class="a" style="left:260px;top:225px;width:293px;height:14px;background:#C8C8C8;border-bottom:1px solid #E4E4E4;"></div>
<div class="a" style="left:432px;top:225px;width:1px;height:14px;background:#F0F0F0;"></div>
<div class="a" style="left:553px;top:225px;width:48px;height:14px;background:#fff;border-bottom:1px solid #E0E0E0;"></div>
<div class="t" style="left:263px;top:227.85px;font-size:8.92px;line-height:8.92px;font-weight:normal;color:#1c1c1c;transform:scaleX(0.945);transform-origin:0 0;">Allow Re-Call of Check</div>
<div class="t" style="left:435.5px;top:227.85px;font-size:8.92px;line-height:8.92px;font-weight:normal;color:#1c1c1c;transform:scaleX(0.945);transform-origin:0 0;">Yes, No, With Manager ID</div>
<div class="t" style="left:574px;top:228.18px;font-size:8.64px;line-height:8.64px;font-weight:normal;color:#505050;">Y</div>
<div class="a" style="left:250px;top:239px;width:10px;height:14px;background:#ECE9D8;border-left:1px solid #fff;border-top:1px solid #fff;border-right:1px solid #716F64;border-bottom:1px solid #716F64;"></div>
<div class="a" style="left:260px;top:239px;width:293px;height:14px;background:#C8C8C8;border-bottom:1px solid #E4E4E4;"></div>
<div class="a" style="left:432px;top:239px;width:1px;height:14px;background:#F0F0F0;"></div>
<div class="a" style="left:553px;top:239px;width:48px;height:14px;background:#fff;border-bottom:1px solid #E0E0E0;"></div>
<div class="t" style="left:263px;top:241.85px;font-size:8.92px;line-height:8.92px;font-weight:normal;color:#1c1c1c;transform:scaleX(0.945);transform-origin:0 0;">Allow Cross Clerk of a Check</div>
<div class="t" style="left:435.5px;top:241.85px;font-size:8.92px;line-height:8.92px;font-weight:normal;color:#1c1c1c;transform:scaleX(0.945);transform-origin:0 0;">Yes, No, With Manager ID</div>
<div class="t" style="left:574px;top:242.18px;font-size:8.64px;line-height:8.64px;font-weight:normal;color:#505050;">M</div>
<div class="a" style="left:250px;top:253px;width:10px;height:14px;background:#ECE9D8;border-left:1px solid #fff;border-top:1px solid #fff;border-right:1px solid #716F64;border-bottom:1px solid #716F64;"></div>
<div class="a" style="left:260px;top:253px;width:293px;height:14px;background:#C8C8C8;border-bottom:1px solid #E4E4E4;"></div>
<div class="a" style="left:432px;top:253px;width:1px;height:14px;background:#F0F0F0;"></div>
<div class="a" style="left:553px;top:253px;width:48px;height:14px;background:#fff;border-bottom:1px solid #E0E0E0;"></div>
<div class="t" style="left:263px;top:255.85px;font-size:8.92px;line-height:8.92px;font-weight:normal;color:#1c1c1c;transform:scaleX(0.945);transform-origin:0 0;">Allow Change of a Closed Check</div>
<div class="t" style="left:435.5px;top:255.85px;font-size:8.92px;line-height:8.92px;font-weight:normal;color:#1c1c1c;transform:scaleX(0.945);transform-origin:0 0;">Yes, No, With Manager ID</div>
<div class="t" style="left:574px;top:256.18px;font-size:8.64px;line-height:8.64px;font-weight:normal;color:#505050;">M</div>
<div class="a" style="left:250px;top:267px;width:10px;height:14px;background:#ECE9D8;border-left:1px solid #fff;border-top:1px solid #fff;border-right:1px solid #716F64;border-bottom:1px solid #716F64;"></div>
<div class="a" style="left:260px;top:267px;width:293px;height:14px;background:#C8C8C8;border-bottom:1px solid #E4E4E4;"></div>
<div class="a" style="left:432px;top:267px;width:1px;height:14px;background:#F0F0F0;"></div>
<div class="a" style="left:553px;top:267px;width:48px;height:14px;background:#fff;border-bottom:1px solid #E0E0E0;"></div>
<div class="t" style="left:263px;top:269.85px;font-size:8.92px;line-height:8.92px;font-weight:normal;color:#1c1c1c;transform:scaleX(0.945);transform-origin:0 0;">Cashier?</div>
<div class="t" style="left:435.5px;top:269.85px;font-size:8.92px;line-height:8.92px;font-weight:normal;color:#1c1c1c;transform:scaleX(0.945);transform-origin:0 0;">Yes, No</div>
<div class="t" style="left:574px;top:270.18px;font-size:8.64px;line-height:8.64px;font-weight:normal;color:#505050;">Y</div>
<div class="a" style="left:250px;top:281px;width:10px;height:14px;background:#ECE9D8;border-left:1px solid #fff;border-top:1px solid #fff;border-right:1px solid #716F64;border-bottom:1px solid #716F64;"></div>
<div class="a" style="left:260px;top:281px;width:293px;height:14px;background:#C8C8C8;border-bottom:1px solid #E4E4E4;"></div>
<div class="a" style="left:432px;top:281px;width:1px;height:14px;background:#F0F0F0;"></div>
<div class="a" style="left:553px;top:281px;width:48px;height:14px;background:#fff;border-bottom:1px solid #E0E0E0;"></div>
<div class="t" style="left:263px;top:283.85px;font-size:8.92px;line-height:8.92px;font-weight:normal;color:#1c1c1c;transform:scaleX(0.945);transform-origin:0 0;">Allow No Sales</div>
<div class="t" style="left:435.5px;top:283.85px;font-size:8.92px;line-height:8.92px;font-weight:normal;color:#1c1c1c;transform:scaleX(0.945);transform-origin:0 0;">Yes, No, With Manager ID</div>
<div class="t" style="left:574px;top:284.18px;font-size:8.64px;line-height:8.64px;font-weight:normal;color:#505050;">Y</div>
<div class="a" style="left:250px;top:295px;width:10px;height:14px;background:#ECE9D8;border-left:1px solid #fff;border-top:1px solid #fff;border-right:1px solid #716F64;border-bottom:1px solid #716F64;"></div>
<div class="a" style="left:260px;top:295px;width:293px;height:14px;background:#C8C8C8;border-bottom:1px solid #E4E4E4;"></div>
<div class="a" style="left:432px;top:295px;width:1px;height:14px;background:#F0F0F0;"></div>
<div class="a" style="left:553px;top:295px;width:48px;height:14px;background:#fff;border-bottom:1px solid #E0E0E0;"></div>
<div class="t" style="left:263px;top:297.85px;font-size:8.92px;line-height:8.92px;font-weight:normal;color:#1c1c1c;transform:scaleX(0.945);transform-origin:0 0;">Allow Exit of Check Before Completion</div>
<div class="t" style="left:435.5px;top:297.85px;font-size:8.92px;line-height:8.92px;font-weight:normal;color:#1c1c1c;transform:scaleX(0.945);transform-origin:0 0;">Yes, No, With Manager ID</div>
<div class="t" style="left:574px;top:298.18px;font-size:8.64px;line-height:8.64px;font-weight:normal;color:#505050;">Y</div>
<div class="a" style="left:250px;top:309px;width:10px;height:14px;background:#ECE9D8;border-left:1px solid #fff;border-top:1px solid #fff;border-right:1px solid #716F64;border-bottom:1px solid #716F64;"></div>
<div class="a" style="left:260px;top:309px;width:293px;height:14px;background:#C8C8C8;border-bottom:1px solid #E4E4E4;"></div>
<div class="a" style="left:432px;top:309px;width:1px;height:14px;background:#F0F0F0;"></div>
<div class="a" style="left:553px;top:309px;width:48px;height:14px;background:#fff;border-bottom:1px solid #E0E0E0;"></div>
<div class="t" style="left:263px;top:311.85px;font-size:8.92px;line-height:8.92px;font-weight:normal;color:#1c1c1c;transform:scaleX(0.945);transform-origin:0 0;">Allow Recall of a Fired Item</div>
<div class="t" style="left:435.5px;top:311.85px;font-size:8.92px;line-height:8.92px;font-weight:normal;color:#1c1c1c;transform:scaleX(0.945);transform-origin:0 0;">Yes, No, With Manager ID</div>
<div class="t" style="left:574px;top:312.18px;font-size:8.64px;line-height:8.64px;font-weight:normal;color:#505050;">M</div>
<div class="a" style="left:250px;top:323px;width:10px;height:14px;background:#ECE9D8;border-left:1px solid #fff;border-top:1px solid #fff;border-right:1px solid #716F64;border-bottom:1px solid #716F64;"></div>
<div class="a" style="left:260px;top:323px;width:293px;height:14px;background:#C8C8C8;border-bottom:1px solid #E4E4E4;"></div>
<div class="a" style="left:432px;top:323px;width:1px;height:14px;background:#F0F0F0;"></div>
<div class="a" style="left:553px;top:323px;width:48px;height:14px;background:#fff;border-bottom:1px solid #E0E0E0;"></div>
<div class="t" style="left:263px;top:325.85px;font-size:8.92px;line-height:8.92px;font-weight:normal;color:#1c1c1c;transform:scaleX(0.945);transform-origin:0 0;">Allow Void of a Fired Item</div>
<div class="t" style="left:435.5px;top:325.85px;font-size:8.92px;line-height:8.92px;font-weight:normal;color:#1c1c1c;transform:scaleX(0.945);transform-origin:0 0;">Yes, No, With Manager ID</div>
<div class="t" style="left:574px;top:326.18px;font-size:8.64px;line-height:8.64px;font-weight:normal;color:#505050;">N</div>
<div class="a" style="left:250px;top:337px;width:10px;height:14px;background:#ECE9D8;border-left:1px solid #fff;border-top:1px solid #fff;border-right:1px solid #716F64;border-bottom:1px solid #716F64;"></div>
<div class="a" style="left:260px;top:337px;width:293px;height:14px;background:#C8C8C8;border-bottom:1px solid #E4E4E4;"></div>
<div class="a" style="left:432px;top:337px;width:1px;height:14px;background:#F0F0F0;"></div>
<div class="a" style="left:553px;top:337px;width:48px;height:14px;background:#fff;border-bottom:1px solid #E0E0E0;"></div>
<div class="t" style="left:263px;top:339.85px;font-size:8.92px;line-height:8.92px;font-weight:normal;color:#1c1c1c;transform:scaleX(0.945);transform-origin:0 0;">Is this a Training ID?</div>
<div class="t" style="left:435.5px;top:339.85px;font-size:8.92px;line-height:8.92px;font-weight:normal;color:#1c1c1c;transform:scaleX(0.945);transform-origin:0 0;">Yes, No</div>
<div class="t" style="left:574px;top:340.18px;font-size:8.64px;line-height:8.64px;font-weight:normal;color:#505050;">N</div>
<div class="a" style="left:250px;top:351px;width:10px;height:14px;background:#ECE9D8;border-left:1px solid #fff;border-top:1px solid #fff;border-right:1px solid #716F64;border-bottom:1px solid #716F64;"></div>
<div class="a" style="left:260px;top:351px;width:293px;height:14px;background:#C8C8C8;border-bottom:1px solid #E4E4E4;"></div>
<div class="a" style="left:432px;top:351px;width:1px;height:14px;background:#F0F0F0;"></div>
<div class="a" style="left:553px;top:351px;width:48px;height:14px;background:#fff;border-bottom:1px solid #E0E0E0;"></div>
<div class="t" style="left:263px;top:353.85px;font-size:8.92px;line-height:8.92px;font-weight:normal;color:#1c1c1c;transform:scaleX(0.945);transform-origin:0 0;">Allow Splitting of Checks</div>
<div class="t" style="left:435.5px;top:353.85px;font-size:8.92px;line-height:8.92px;font-weight:normal;color:#1c1c1c;transform:scaleX(0.945);transform-origin:0 0;">Yes, No, With Manager ID</div>
<div class="t" style="left:574px;top:354.18px;font-size:8.64px;line-height:8.64px;font-weight:normal;color:#505050;">Y</div>
<div class="a" style="left:250px;top:365px;width:10px;height:14px;background:#ECE9D8;border-left:1px solid #fff;border-top:1px solid #fff;border-right:1px solid #716F64;border-bottom:1px solid #716F64;"></div>
<div class="a" style="left:260px;top:365px;width:293px;height:14px;background:#C8C8C8;border-bottom:1px solid #E4E4E4;"></div>
<div class="a" style="left:432px;top:365px;width:1px;height:14px;background:#F0F0F0;"></div>
<div class="a" style="left:553px;top:365px;width:48px;height:14px;background:#fff;border-bottom:1px solid #E0E0E0;"></div>
<div class="t" style="left:263px;top:367.85px;font-size:8.92px;line-height:8.92px;font-weight:normal;color:#1c1c1c;transform:scaleX(0.945);transform-origin:0 0;">Allow &quot;Z&quot; Check-Outs</div>
<div class="t" style="left:435.5px;top:367.85px;font-size:8.92px;line-height:8.92px;font-weight:normal;color:#1c1c1c;transform:scaleX(0.945);transform-origin:0 0;">Yes, No, With Manager ID</div>
<div class="t" style="left:574px;top:368.18px;font-size:8.64px;line-height:8.64px;font-weight:normal;color:#505050;">Y</div>
<div class="a" style="left:250px;top:379px;width:10px;height:14px;background:#ECE9D8;border-left:1px solid #fff;border-top:1px solid #fff;border-right:1px solid #716F64;border-bottom:1px solid #716F64;"></div>
<div class="a" style="left:260px;top:379px;width:293px;height:14px;background:#C8C8C8;border-bottom:1px solid #E4E4E4;"></div>
<div class="a" style="left:432px;top:379px;width:1px;height:14px;background:#F0F0F0;"></div>
<div class="a" style="left:553px;top:379px;width:48px;height:14px;background:#fff;border-bottom:1px solid #E0E0E0;"></div>
<div class="t" style="left:263px;top:381.85px;font-size:8.92px;line-height:8.92px;font-weight:normal;color:#1c1c1c;transform:scaleX(0.945);transform-origin:0 0;">Allow Reprint of Closed Ticket</div>
<div class="t" style="left:435.5px;top:381.85px;font-size:8.92px;line-height:8.92px;font-weight:normal;color:#1c1c1c;transform:scaleX(0.945);transform-origin:0 0;">Yes, No, With Manager ID</div>
<div class="t" style="left:574px;top:382.18px;font-size:8.64px;line-height:8.64px;font-weight:normal;color:#505050;">Y</div>
<div class="a" style="left:250px;top:393px;width:10px;height:14px;background:#ECE9D8;border-left:1px solid #fff;border-top:1px solid #fff;border-right:1px solid #716F64;border-bottom:1px solid #716F64;"></div>
<div class="a" style="left:260px;top:393px;width:293px;height:14px;background:#C8C8C8;border-bottom:1px solid #E4E4E4;"></div>
<div class="a" style="left:432px;top:393px;width:1px;height:14px;background:#F0F0F0;"></div>
<div class="a" style="left:553px;top:393px;width:48px;height:14px;background:#fff;border-bottom:1px solid #E0E0E0;"></div>
<div class="t" style="left:263px;top:395.85px;font-size:8.92px;line-height:8.92px;font-weight:normal;color:#1c1c1c;transform:scaleX(0.945);transform-origin:0 0;">Allow Override of Tax/Service Chrg Rule</div>
<div class="t" style="left:435.5px;top:395.85px;font-size:8.92px;line-height:8.92px;font-weight:normal;color:#1c1c1c;transform:scaleX(0.945);transform-origin:0 0;">Yes, No, With Manager ID</div>
<div class="t" style="left:574px;top:396.18px;font-size:8.64px;line-height:8.64px;font-weight:normal;color:#505050;">M</div>
<div class="a" style="left:251px;top:407px;width:9px;height:1px;background:#716F64;"></div>
<div class="a" style="left:602px;top:155px;width:12px;height:263px;background:linear-gradient(90deg,#F3F1EC,#FEFEFB);"></div>
<div class="a" style="left:602px;top:155px;width:12px;height:13px;background:linear-gradient(135deg,#DCE6FE,#C0D2FA);border:1px solid #D2DEFA;border-radius:2px;"></div>
<svg style="left:604px;top:158px" width="8" height="5"><path d="M0.8 4.4L4 1.2L7.2 4.4" fill="none" stroke="#34486E" stroke-width="1.9"/></svg>
<div class="a" style="left:602px;top:405px;width:12px;height:13px;background:linear-gradient(135deg,#DCE6FE,#C0D2FA);border:1px solid #D2DEFA;border-radius:2px;"></div>
<svg style="left:604px;top:409px" width="8" height="5"><path d="M0.8 0.6L4 3.8L7.2 0.6" fill="none" stroke="#34486E" stroke-width="1.9"/></svg>
<div class="a" style="left:602px;top:171px;width:12px;height:55px;background:linear-gradient(90deg,#B5C8F7,#C6D6FB 60%,#B7CAF7);border:1px solid #A9BDF2;border-radius:2px;"></div>
<div class="a" style="left:605px;top:194px;width:6px;height:1px;background:#E8EEFD;"></div>
<div class="a" style="left:605px;top:196px;width:6px;height:1px;background:#E8EEFD;"></div>
<div class="a" style="left:605px;top:198px;width:6px;height:1px;background:#E8EEFD;"></div>
<div class="a" style="left:605px;top:200px;width:6px;height:1px;background:#E8EEFD;"></div>
<div class="a" style="left:12px;top:429px;width:19px;height:19px;background:#EFEDE2;border-left:1px solid #B8B5A5;border-top:1px solid #B8B5A5;border-right:1px solid #FBFAF5;border-bottom:1px solid #FBFAF5;"></div>
<svg style="left:14px;top:431px" width="16" height="15"><path d="M5.5 1.5H12L14.5 4V13.5H5.5Z" fill="#E8E8E8" stroke="#303030" stroke-width="1"/><path d="M12 1.5V4H14.5" fill="none" stroke="#303030" stroke-width="0.8"/><path d="M3 2L10 9.5" stroke="#333" stroke-width="2.4"/><path d="M3.4 2.4L9.6 9" stroke="#B8B820" stroke-width="1.1"/><path d="M2.5 7.5H8.5L7.5 12.5H2.5Z" fill="#E6E640" stroke="#707010" stroke-width="0.6"/><rect x="1" y="7.5" width="1.6" height="5" fill="#10C0C0"/></svg>
<svg style="left:41px;top:429px" width="73" height="20"><path d="M9.5 17.5 A8.5 8.5 0 0 1 9.5 1.5H63.5" fill="none" stroke="#FAF9F4" stroke-width="1.2"/><path d="M66.41 1.51 A8.5 8.5 0 0 1 63.5 18H7.0" fill="none" stroke="#1E1E1E" stroke-width="1.4"/></svg>
<svg style="left:62px;top:431px" width="14" height="14"><rect x="0.5" y="0.5" width="7.5" height="9" fill="#f4f4f4" stroke="#333" stroke-width="0.9"/><path d="M2 3H6M2 5H6M2 7H5" stroke="#777" stroke-width="0.7"/><path d="M6.5 2.5Q10 1.5 11 5" fill="none" stroke="#e21" stroke-width="1.6"/><path d="M9.2 4.6L11.2 7L12.8 4.2Z" fill="#e21"/><rect x="5.5" y="7" width="8" height="6.5" fill="#1a1a1a"/><rect x="7.5" y="7.5" width="4" height="2.2" fill="#fff"/><rect x="8" y="11" width="3" height="2" fill="#bbb"/></svg>
<div class="t" style="left:79.4px;top:433.77px;font-size:8.78px;line-height:8.78px;font-weight:normal;color:#111;transform:scaleX(0.9745);transform-origin:0 0;text-decoration:none;">Save</div>
<div class="a" style="left:80px;top:442px;width:5px;height:1px;background:#111;"></div>
<svg style="left:115px;top:429px" width="74" height="20"><path d="M9.5 17.5 A8.5 8.5 0 0 1 9.5 1.5H64.5" fill="none" stroke="#FAF9F4" stroke-width="1.2"/><path d="M67.41 1.51 A8.5 8.5 0 0 1 64.5 18H7.0" fill="none" stroke="#1E1E1E" stroke-width="1.4"/></svg>
<svg style="left:138px;top:432px" width="13" height="13"><path d="M1.8 1.8L10.8 10.8M10.8 1.8L1.8 10.8" stroke="#E040C0" stroke-width="3.6"/><path d="M1.8 1.8L10.8 10.8M10.8 1.8L1.8 10.8" stroke="#B00018" stroke-width="2.6"/></svg>
<div class="t" style="left:154.3px;top:433.77px;font-size:8.78px;line-height:8.78px;font-weight:normal;color:#111;transform:scaleX(0.9053);transform-origin:0 0;">Undo</div>
<div class="a" style="left:155px;top:442px;width:5px;height:1px;background:#111;"></div>
<svg style="left:543px;top:429px" width="72" height="20"><path d="M9.5 17.5 A8.5 8.5 0 0 1 9.5 1.5H62.5" fill="none" stroke="#FAF9F4" stroke-width="1.2"/><path d="M65.41 1.51 A8.5 8.5 0 0 1 62.5 18H7.0" fill="none" stroke="#1E1E1E" stroke-width="1.4"/></svg>
<svg style="left:561px;top:430px" width="16" height="15"><rect x="6" y="0" width="4" height="2" fill="#086"/><rect x="4.5" y="2" width="3" height="10" fill="#B040C0"/><rect x="7.5" y="2" width="3" height="10" fill="#70E0F0"/><path d="M0.5 13.5H4.5V3M11 3V13.5H15.5" fill="none" stroke="#3030B0" stroke-width="1.2"/></svg>
<div class="t" style="left:580.5px;top:433.77px;font-size:8.78px;line-height:8.78px;font-weight:normal;color:#111;transform:scaleX(0.8911);transform-origin:0 0;">Close</div>
<div class="a" style="left:581px;top:442px;width:5px;height:1px;background:#111;"></div>
<div class="a" style="left:5px;top:450px;width:618px;height:2px;background:#F7F5EC;"></div>
<div class="a" style="left:5px;top:453px;width:75px;height:13px;border-left:1px solid #C9C6B6;border-top:1px solid #C9C6B6;border-right:1px solid #FBFAF4;border-bottom:1px solid #FBFAF4;"></div>
<div class="a" style="left:81px;top:453px;width:148px;height:13px;border-left:1px solid #C9C6B6;border-top:1px solid #C9C6B6;border-right:1px solid #FBFAF4;border-bottom:1px solid #FBFAF4;"></div>
<div class="a" style="left:230px;top:453px;width:371px;height:13px;border-left:1px solid #C9C6B6;border-top:1px solid #C9C6B6;border-right:1px solid #FBFAF4;border-bottom:1px solid #FBFAF4;"></div>
<div class="a" style="left:601px;top:453px;width:22px;height:13px;border-left:1px solid #C9C6B6;border-top:1px solid #C9C6B6;border-right:1px solid #FBFAF4;border-bottom:1px solid #FBFAF4;"></div>
<div class="t" style="left:7.2px;top:455.32px;font-size:10.01px;line-height:10.01px;font-weight:normal;color:#111;transform:scaleX(0.8360);transform-origin:0 0;">STS - STS</div>
<div class="t" style="left:83.5px;top:455.32px;font-size:10.01px;line-height:10.01px;font-weight:normal;color:#111;transform:scaleX(0.8184);transform-origin:0 0;">00 - FB - DR - BUTCH</div>
<div class="t" style="left:603.3px;top:455.69px;font-size:9.47px;line-height:9.47px;font-weight:bold;color:#222;transform:scaleX(0.6839);transform-origin:0 0;">1</div>
<svg style="left:612px;top:455px" width="11" height="11"><path d="M10 2L2 10M10 5L5 10M10 8L8 10" stroke="#B0AC98" stroke-width="1"/></svg>
</body></html>
